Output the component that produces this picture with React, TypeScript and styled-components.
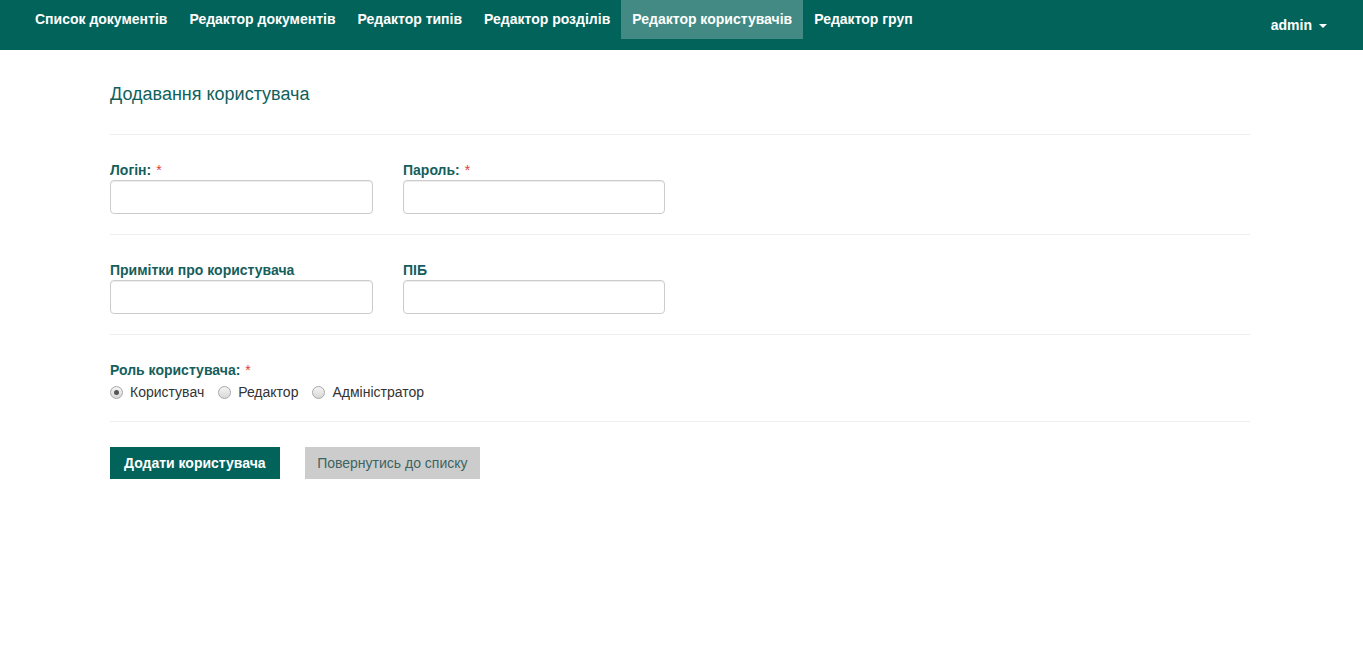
import React from "react";
import styled, { createGlobalStyle } from "styled-components";

const Global = createGlobalStyle`
  html, body { margin: 0; padding: 0; background: #fff; }
  body { font-family: "Liberation Sans", Arial, sans-serif; font-size: 14px; color: #333; }
  * { box-sizing: border-box; }
`;

const Navbar = styled.nav`
  height: 50px;
  background: #02635b;
  display: flex;
  align-items: flex-start;
  justify-content: space-between;
  padding: 0 36px 0 24px;
`;

const NavList = styled.ul`
  display: flex;
  list-style: none;
  margin: 0;
  padding: 0;
`;

const NavItem = styled.li<{ $active?: boolean }>`
  height: 39px;
  line-height: 39px;
  padding: 0 11px;
  font-weight: bold;
  font-size: 14px;
  color: #fff;
  background: ${(p) => (p.$active ? "#428a83" : "transparent")};
  white-space: nowrap;
  cursor: pointer;
`;

const User = styled.div`
  height: 50px;
  display: flex;
  align-items: center;
  gap: 7px;
  font-weight: bold;
  font-size: 14px;
  color: #fff;
`;

const Caret = styled.span`
  width: 0;
  height: 0;
  border-left: 4px solid transparent;
  border-right: 4px solid transparent;
  border-top: 4px solid #fff;
  margin-top: 1px;
`;

const Container = styled.main`
  width: 1140px;
  margin-left: 110px;
  padding-top: 34px;
`;

const Title = styled.h3`
  margin: 0;
  font-size: 18px;
  line-height: 20px;
  font-weight: normal;
  color: #10615c;
  padding-bottom: 30px;
  border-bottom: 1px solid #eee;
`;

const Section = styled.section<{ $bottom?: number }>`
  padding: 26px 0 ${(p) => p.$bottom ?? 20}px;
  border-bottom: 1px solid #eee;
`;

const Row = styled.div`
  display: grid;
  grid-template-columns: 263px 262px;
  column-gap: 30px;
`;

const Field = styled.div`
  display: flex;
  flex-direction: column;
`;

const Label = styled.label`
  font-weight: bold;
  font-size: 14px;
  line-height: 19px;
  color: #165e5c;
`;

const Req = styled.span`
  color: #e23b3b;
  font-weight: normal;
  margin-left: 5px;
`;

const Input = styled.input`
  height: 34px;
  width: 100%;
  border: 1px solid #ccc;
  border-radius: 4px;
  box-shadow: inset 0 1px 1px rgba(0, 0, 0, 0.075);
  padding: 6px 12px;
  font: inherit;
  outline: none;
`;

const Radios = styled.div`
  display: flex;
  gap: 14px;
  margin-top: 3px;
`;

const RadioOpt = styled.label`
  display: flex;
  align-items: center;
  gap: 7px;
  font-size: 14px;
  line-height: 18px;
  color: #333;
  cursor: pointer;
`;

const RadioDot = styled.span<{ $checked?: boolean }>`
  width: 13px;
  height: 13px;
  border-radius: 50%;
  border: 1px solid #a8a8a8;
  background: linear-gradient(#f4f4f4, #d8d8d8);
  display: flex;
  align-items: center;
  justify-content: center;
  &::after {
    content: "";
    width: 5px;
    height: 5px;
    border-radius: 50%;
    background: ${(p) => (p.$checked ? "#555" : "transparent")};
  }
`;

const Actions = styled.div`
  display: flex;
  gap: 25px;
  padding-top: 25px;
`;

const Button = styled.button<{ $primary?: boolean }>`
  height: 32px;
  border: none;
  padding: 0 ${(p) => (p.$primary ? 14 : 12.5)}px;
  font-family: inherit;
  font-size: 14px;
  font-weight: ${(p) => (p.$primary ? "bold" : "normal")};
  background: ${(p) => (p.$primary ? "#02635b" : "#cccccc")};
  color: ${(p) => (p.$primary ? "#fff" : "#3c6462")};
  cursor: pointer;
`;

const navItems = [
  "Список документів",
  "Редактор документів",
  "Редактор типів",
  "Редактор розділів",
  "Редактор користувачів",
  "Редактор груп",
];

export default function App() {
  return (
    <>
      <Global />
      <Navbar>
        <NavList>
          {navItems.map((n) => (
            <NavItem key={n} $active={n === "Редактор користувачів"}>
              {n}
            </NavItem>
          ))}
        </NavList>
        <User>
          admin <Caret />
        </User>
      </Navbar>
      <Container>
        <Title>Додавання користувача</Title>
        <Section>
          <Row>
            <Field>
              <Label>
                Логін:<Req>*</Req>
              </Label>
              <Input />
            </Field>
            <Field>
              <Label>
                Пароль:<Req>*</Req>
              </Label>
              <Input type="password" />
            </Field>
          </Row>
        </Section>
        <Section>
          <Row>
            <Field>
              <Label>Примітки про користувача</Label>
              <Input />
            </Field>
            <Field>
              <Label>ПІБ</Label>
              <Input />
            </Field>
          </Row>
        </Section>
        <Section $bottom={20}>
          <Label>
            Роль користувача:<Req>*</Req>
          </Label>
          <Radios>
            <RadioOpt>
              <RadioDot $checked /> Користувач
            </RadioOpt>
            <RadioOpt>
              <RadioDot /> Редактор
            </RadioOpt>
            <RadioOpt>
              <RadioDot /> Адміністратор
            </RadioOpt>
          </Radios>
        </Section>
        <Actions>
          <Button $primary>Додати користувача</Button>
          <Button>Повернутись до списку</Button>
        </Actions>
      </Container>
    </>
  );
}
